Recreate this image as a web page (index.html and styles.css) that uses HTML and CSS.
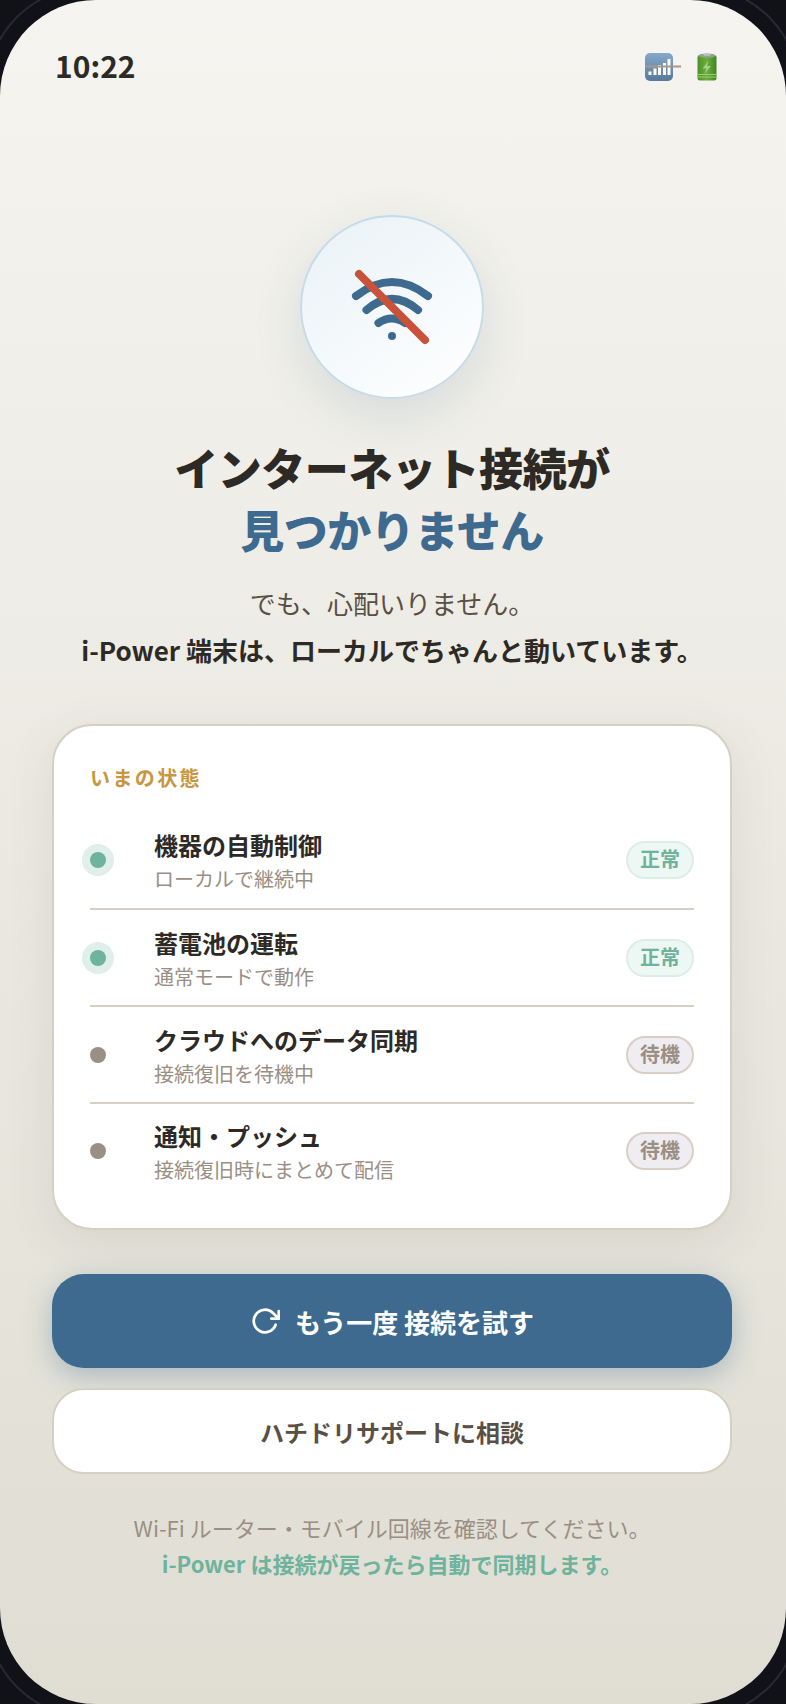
FILE: index.html
```html
<!DOCTYPE html>
<html lang="ja">
<head>
    <meta charset="UTF-8">
    <meta name="viewport" content="width=device-width, initial-scale=1.0">
    <title>i-Power</title>
    <link rel="stylesheet" href="styles.css">
</head>
<body>
    <div class="phone">
        <div class="screen">
            <div class="status-bar">
                <span class="time">10:22</span>
                <div class="status-icons">
                    <svg class="icon-signal" width="36" height="28" viewBox="0 0 36 28">
                        <defs>
                            <linearGradient id="sigBg" x1="0" y1="0" x2="0" y2="1">
                                <stop offset="0" stop-color="#86a9c9"/>
                                <stop offset="1" stop-color="#57799a"/>
                            </linearGradient>
                        </defs>
                        <rect width="28" height="28" rx="5" fill="url(#sigBg)"/>
                        <rect x="3.5" y="18.5" width="3" height="3.5" fill="#fff"/>
                        <rect x="8.5" y="15.5" width="3" height="6.5" fill="#fff"/>
                        <rect x="13" y="12" width="3" height="10" fill="#fff"/>
                        <rect x="18" y="10" width="3" height="12" fill="#fff"/>
                        <rect x="22.5" y="6" width="3" height="16" fill="#fff"/>
                        <rect y="12.5" width="36" height="2" fill="#a39a8f"/>
                    </svg>
                    <svg class="icon-battery" width="20" height="28" viewBox="0 0 20 28">
                        <defs>
                            <linearGradient id="batBg" x1="0" y1="0" x2="1" y2="0">
                                <stop offset="0" stop-color="#4b9329"/>
                                <stop offset="0.5" stop-color="#6cae3a"/>
                                <stop offset="1" stop-color="#3f8524"/>
                            </linearGradient>
                        </defs>
                        <rect x="0.5" y="2" width="19" height="25.5" rx="2.5" fill="url(#batBg)"/>
                        <ellipse cx="10" cy="2.6" rx="8.5" ry="2.2" fill="#8fa585"/>
                        <rect x="6.5" y="0.5" width="7" height="2.2" rx="1" fill="#b7c2cc"/>
                        <path d="M11.5 8 L5.5 15.5 H9.5 L7.5 21 L14 13 H10 Z" fill="#a8cf8a"/>
                        <path d="M1 21.5 H19 M1 24 H19" stroke="#9ccb7a" stroke-width="1"/>
                    </svg>
                </div>
            </div>

            <div class="hero">
                <div class="hero-circle">
                    <svg width="96" height="96" viewBox="0 0 96 96" fill="none" stroke-linecap="round">
                        <path d="M12 37 Q48 9 84 37" stroke="#3d6a8e" stroke-width="8"/>
                        <path d="M22.5 51 Q48 29 74 51" stroke="#3d6a8e" stroke-width="8"/>
                        <path d="M34.5 64 Q47.5 55 61 64" stroke="#3d6a8e" stroke-width="8"/>
                        <circle cx="48" cy="77" r="4" fill="#3d6a8e"/>
                        <line x1="15" y1="15" x2="81" y2="81" stroke="#c8523a" stroke-width="8"/>
                    </svg>
                </div>
                <h1 class="title">インターネット接続が<br><span class="title-accent">見つかりません</span></h1>
                <p class="lead">でも、心配いりません。<br><strong>i-Power 端末は、ローカルでちゃんと動いています。</strong></p>
            </div>

            <div class="card">
                <div class="card-label">いまの状態</div>
                <div class="row">
                    <span class="dot dot-ok"></span>
                    <div class="row-text">
                        <div class="row-title">機器の自動制御</div>
                        <div class="row-sub">ローカルで継続中</div>
                    </div>
                    <span class="badge badge-ok">正常</span>
                </div>
                <div class="row">
                    <span class="dot dot-ok"></span>
                    <div class="row-text">
                        <div class="row-title">蓄電池の運転</div>
                        <div class="row-sub">通常モードで動作</div>
                    </div>
                    <span class="badge badge-ok">正常</span>
                </div>
                <div class="row">
                    <span class="dot dot-wait"></span>
                    <div class="row-text">
                        <div class="row-title">クラウドへのデータ同期</div>
                        <div class="row-sub">接続復旧を待機中</div>
                    </div>
                    <span class="badge badge-wait">待機</span>
                </div>
                <div class="row">
                    <span class="dot dot-wait"></span>
                    <div class="row-text">
                        <div class="row-title">通知・プッシュ</div>
                        <div class="row-sub">接続復旧時にまとめて配信</div>
                    </div>
                    <span class="badge badge-wait">待機</span>
                </div>
            </div>

            <button class="btn btn-primary">
                <svg width="30" height="30" viewBox="0 0 24 24" fill="none" stroke="#fff" stroke-width="2.2" stroke-linecap="round" stroke-linejoin="round">
                    <polyline points="23 4 23 10 17 10"/>
                    <path d="M20.49 15a9 9 0 1 1-2.12-9.36L23 10"/>
                </svg>
                <span>もう一度 接続を試す</span>
            </button>
            <button class="btn btn-secondary">ハチドリサポートに相談</button>

            <p class="note">Wi-Fi ルーター・モバイル回線を確認してください。<br><strong>i-Power は接続が戻ったら自動で同期します。</strong></p>
        </div>
    </div>
</body>
</html>
```
FILE: styles.css
```css
* {
    box-sizing: border-box;
}
html, body {
    margin: 0;
    padding: 0;
}
body {
    background-color: #111118;
    font-family: "Noto Sans CJK JP", "Noto Sans", sans-serif;
    color: #2d2a26;
}
.phone {
    position: relative;
    width: 786px;
    height: 1704px;
    overflow: hidden;
    background-color: #111118;
}
/* thin ring of the phone body, only seen in the corners */
.phone::before {
    content: "";
    position: absolute;
    inset: -15px;
    border: 2px solid #2a2a32;
    border-radius: 107px;
}
.screen {
    position: relative;
    height: 1704px;
    padding: 53px 54px 0 52px;
    border-radius: 96px;
    overflow: hidden;
    background: linear-gradient(180deg, #f5f4f0 0%, #e0ded3 100%);
}

/* status bar */
.status-bar {
    display: flex;
    justify-content: space-between;
    align-items: center;
    height: 28px;
    padding: 0 15px 0 3px;
}
.time {
    margin-bottom: 5px;
    font-size: 30px;
    font-weight: 700;
    line-height: 28px;
}
.status-icons {
    display: flex;
    gap: 16px;
}

/* hero */
.hero {
    display: flex;
    flex-direction: column;
    align-items: center;
    text-align: center;
}
.hero-circle {
    display: flex;
    align-items: center;
    justify-content: center;
    width: 184px;
    height: 184px;
    margin-top: 134px;
    border: 2px solid #c5dbe9;
    border-radius: 50%;
    background: linear-gradient(145deg, #e9f2f6 0%, #ffffff 100%);
    box-shadow: 0 16px 48px rgba(61, 106, 142, 0.15);
}
.title {
    margin: 37px 0 0;
    font-size: 44px;
    font-weight: 900;
    line-height: 62px;
    letter-spacing: -0.44px;
}
.title-accent {
    color: #3d6a8e;
}
.lead {
    margin: 19px 0 0;
    font-size: 26px;
    line-height: 47px;
    color: #5a4f45;
}
.lead strong {
    font-weight: 700;
    color: #2d2a26;
}

/* status card */
.card {
    margin-top: 51px;
    padding: 37px 36px 0;
    height: 506px;
    background-color: #fff;
    border: 2px solid #d8cfc4;
    border-radius: 40px;
    box-shadow: 0 12px 48px rgba(90, 80, 70, 0.1);
}
.card-label {
    font-size: 20px;
    font-weight: 700;
    line-height: 30px;
    letter-spacing: 2.4px;
    color: #c8963e;
}
.row {
    display: flex;
    align-items: center;
    height: 97px;
    border-bottom: 2px solid #d8cfc4;
}
.card-label + .row {
    height: 98px;
    margin-top: 19px;
}
.row:last-child {
    height: 94px;
    border-bottom: 0;
}
.dot {
    flex: none;
    width: 16px;
    height: 16px;
    margin-right: 48px;
    border-radius: 50%;
}
.dot-ok {
    background-color: #6db39d;
    box-shadow: 0 0 0 8px #e0efe9;
}
.dot-wait {
    background-color: #9a8f84;
}
.row-text {
    flex: 1;
}
.row-title {
    font-size: 24px;
    font-weight: 700;
    line-height: 38px;
}
.row-sub {
    font-size: 20px;
    line-height: 30px;
    color: #9a8f84;
}
.badge {
    width: 68px;
    height: 38px;
    border: 2px solid;
    border-radius: 19px;
    font-size: 20px;
    font-weight: 700;
    line-height: 32px;
    text-align: center;
}
.badge-ok {
    color: #6db39d;
    background-color: #edf7f3;
    border-color: #dceee7;
}
.badge-wait {
    color: #9a8f84;
    background-color: #f0edf2;
    border-color: #d8cfc4;
}

/* buttons */
.btn {
    display: flex;
    align-items: center;
    justify-content: center;
    width: 100%;
    font-family: inherit;
    font-weight: 700;
}
.btn-primary {
    gap: 15px;
    height: 94px;
    margin-top: 44px;
    border: 0;
    border-radius: 32px;
    background-color: #3d6a8e;
    color: #fff;
    font-size: 26px;
    box-shadow: 0 8px 28px rgba(61, 106, 142, 0.35);
}
.btn-secondary {
    height: 86px;
    margin-top: 20px;
    background-color: #fff;
    border: 2px solid #d8cfc4;
    border-radius: 32px;
    color: #5a4f45;
    font-size: 24px;
}

/* footer note */
.note {
    margin: 35px 0 0;
    font-size: 22px;
    line-height: 36px;
    text-align: center;
    color: #9a8f84;
}
.note strong {
    font-weight: 700;
    color: #6db39d;
}
```
